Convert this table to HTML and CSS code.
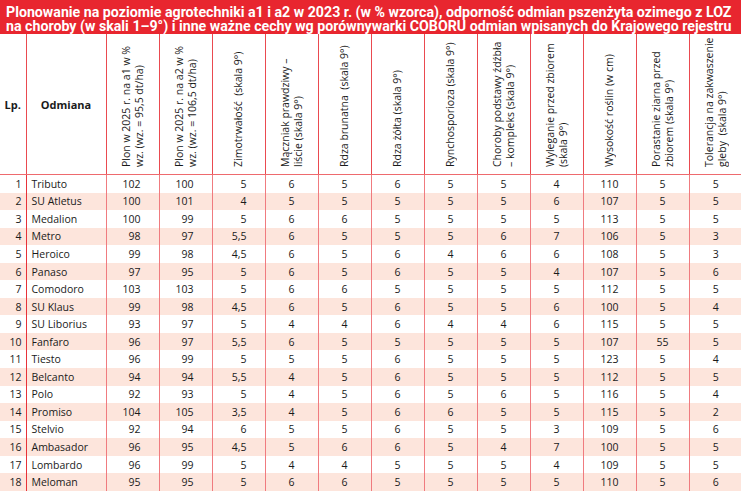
FILE: index.html
```html
<!DOCTYPE html>
<html lang="pl">
<head>
<meta charset="utf-8">
<title>Plonowanie pszenżyta ozimego</title>
<link rel="stylesheet" href="styles.css">
</head>
<body>
<div class="title">Plonowanie na poziomie agrotechniki a1 i a2 w 2023 r. (w % wzorca), odporność odmian pszenżyta ozimego z LOZ<br>na choroby (w skali 1–9°) i inne ważne cechy wg porównywarki COBORU odmian wpisanych do Krajowego rejestru</div>
<table class="grid">
<colgroup>
<col class="c-lp"><col class="c-name">
<col class="c-n"><col class="c-n"><col class="c-n"><col class="c-n"><col class="c-n"><col class="c-n"><col class="c-n"><col class="c-n"><col class="c-n"><col class="c-n"><col class="c-n"><col class="c-last">
</colgroup>
<thead>
<tr>
<th class="h-lp">Lp.</th>
<th class="h-name">Odmiana</th>
<th><div class="rot">Plon w 2025 r. na a1 w %<br>wz. (wz. = 95,5 dt/ha)</div></th>
<th><div class="rot">Plon w 2025 r. na a2 w %<br>wz. (wz. = 106,5 dt/ha)</div></th>
<th><div class="rot">Zimotrwałość&nbsp; (skala 9°)</div></th>
<th><div class="rot">Mączniak prawdziwy –<br>liście (skala 9°)</div></th>
<th><div class="rot">Rdza brunatna&nbsp; (skala 9°)</div></th>
<th><div class="rot">Rdza żółta (skala 9°)</div></th>
<th><div class="rot">Rynchosporioza (skala 9°)</div></th>
<th><div class="rot">Choroby podstawy źdźbła<br>– kompleks (skala 9°)</div></th>
<th><div class="rot">Wyleganie przed zbiorem<br>(skala 9°)</div></th>
<th><div class="rot">Wysokość roślin (w cm)</div></th>
<th><div class="rot">Porastanie ziarna przed<br>zbiorem (skala 9°)</div></th>
<th><div class="rot">Tolerancja na zakwaszenie<br>gleby&nbsp; (skala 9°)</div></th>
</tr>
</thead>
<tbody>
<tr><td class="lp">1</td><td class="name">Tributo</td><td class="r">102</td><td class="r">100</td><td class="r">5</td><td>6</td><td>5</td><td>6</td><td>5</td><td>5</td><td>4</td><td>110</td><td>5</td><td>5</td></tr>
<tr><td class="lp">2</td><td class="name">SU Atletus</td><td class="r">100</td><td class="r">101</td><td class="r">4</td><td>5</td><td>5</td><td>5</td><td>5</td><td>5</td><td>6</td><td>107</td><td>5</td><td>5</td></tr>
<tr><td class="lp">3</td><td class="name">Medalion</td><td class="r">100</td><td class="r">99</td><td class="r">5</td><td>6</td><td>6</td><td>5</td><td>5</td><td>5</td><td>5</td><td>113</td><td>5</td><td>5</td></tr>
<tr><td class="lp">4</td><td class="name">Metro</td><td class="r">98</td><td class="r">97</td><td class="r">5,5</td><td>6</td><td>5</td><td>5</td><td>5</td><td>6</td><td>7</td><td>106</td><td>5</td><td>3</td></tr>
<tr><td class="lp">5</td><td class="name">Heroico</td><td class="r">99</td><td class="r">98</td><td class="r">4,5</td><td>6</td><td>5</td><td>6</td><td>4</td><td>6</td><td>6</td><td>108</td><td>5</td><td>3</td></tr>
<tr><td class="lp">6</td><td class="name">Panaso</td><td class="r">97</td><td class="r">95</td><td class="r">5</td><td>6</td><td>5</td><td>6</td><td>5</td><td>5</td><td>4</td><td>107</td><td>5</td><td>6</td></tr>
<tr><td class="lp">7</td><td class="name">Comodoro</td><td class="r">103</td><td class="r">103</td><td class="r">5</td><td>6</td><td>6</td><td>5</td><td>5</td><td>5</td><td>5</td><td>112</td><td>5</td><td>5</td></tr>
<tr><td class="lp">8</td><td class="name">SU Klaus</td><td class="r">99</td><td class="r">98</td><td class="r">4,5</td><td>6</td><td>5</td><td>6</td><td>5</td><td>5</td><td>6</td><td>100</td><td>5</td><td>4</td></tr>
<tr><td class="lp">9</td><td class="name">SU Liborius</td><td class="r">93</td><td class="r">97</td><td class="r">5</td><td>4</td><td>4</td><td>6</td><td>4</td><td>4</td><td>6</td><td>115</td><td>5</td><td>5</td></tr>
<tr><td class="lp">10</td><td class="name">Fanfaro</td><td class="r">96</td><td class="r">97</td><td class="r">5,5</td><td>6</td><td>5</td><td>5</td><td>5</td><td>5</td><td>5</td><td>107</td><td>55</td><td>5</td></tr>
<tr><td class="lp">11</td><td class="name">Tiesto</td><td class="r">96</td><td class="r">99</td><td class="r">5</td><td>5</td><td>5</td><td>6</td><td>5</td><td>5</td><td>5</td><td>123</td><td>5</td><td>4</td></tr>
<tr><td class="lp">12</td><td class="name">Belcanto</td><td class="r">94</td><td class="r">94</td><td class="r">5,5</td><td>4</td><td>5</td><td>6</td><td>5</td><td>5</td><td>5</td><td>112</td><td>5</td><td>5</td></tr>
<tr><td class="lp">13</td><td class="name">Polo</td><td class="r">92</td><td class="r">93</td><td class="r">5</td><td>4</td><td>5</td><td>6</td><td>5</td><td>6</td><td>5</td><td>116</td><td>5</td><td>4</td></tr>
<tr><td class="lp">14</td><td class="name">Promiso</td><td class="r">104</td><td class="r">105</td><td class="r">3,5</td><td>4</td><td>5</td><td>6</td><td>6</td><td>5</td><td>5</td><td>115</td><td>5</td><td>2</td></tr>
<tr><td class="lp">15</td><td class="name">Stelvio</td><td class="r">92</td><td class="r">94</td><td class="r">6</td><td>5</td><td>5</td><td>6</td><td>5</td><td>5</td><td>3</td><td>109</td><td>5</td><td>6</td></tr>
<tr><td class="lp">16</td><td class="name">Ambasador</td><td class="r">96</td><td class="r">95</td><td class="r">4,5</td><td>5</td><td>6</td><td>6</td><td>5</td><td>4</td><td>7</td><td>100</td><td>5</td><td>5</td></tr>
<tr><td class="lp">17</td><td class="name">Lombardo</td><td class="r">96</td><td class="r">99</td><td class="r">5</td><td>4</td><td>4</td><td>5</td><td>5</td><td>5</td><td>4</td><td>109</td><td>5</td><td>5</td></tr>
<tr><td class="lp">18</td><td class="name">Meloman</td><td class="r">95</td><td class="r">95</td><td class="r">5</td><td>6</td><td>6</td><td>5</td><td>5</td><td>5</td><td>5</td><td>110</td><td>5</td><td>6</td></tr>
</tbody>
</table>
</body>
</html>
```

FILE: styles.css
```css
html, body {
  margin: 0;
  padding: 0;
  background: #ffffff;
}
body {
  width: 741px;
  height: 492px;
  overflow: hidden;
  font-family: "Open Sans", "Noto Sans", sans-serif;
  color: #1a1a1a;
}
.title {
  background: #e8262f;
  color: #ffffff;
  font-family: Roboto, "Open Sans", sans-serif;
  font-weight: 700;
  font-size: 14.2px;
  line-height: 14px;
  height: 34px;
  box-sizing: border-box;
  padding: 5px 0 0 6px;
  white-space: nowrap;
  overflow: hidden;
}
.grid {
  border-collapse: collapse;
  table-layout: fixed;
  width: 742px;
  font-size: 10.5px;
}
.c-lp { width: 26px; }
.c-name { width: 80px; }
.c-n { width: 53px; }
.c-last { width: 53px; }
.grid th, .grid td {
  padding: 0;
  border-left: 1px solid #ea4a50;
}
.grid th:first-child, .grid td:first-child {
  border-left: none;
}
.grid thead th {
  height: 140px;
  border-bottom: 1px solid #ee6a6e;
  font-weight: 400;
  font-size: 10.5px;
  text-align: center;
  vertical-align: bottom;
}
.grid thead th.h-lp,
.grid thead th.h-name {
  font-weight: 700;
  vertical-align: middle;
  font-size: 11px;
}
.rot {
  display: inline-block;
  writing-mode: vertical-rl;
  transform: rotate(180deg);
  height: 131px;
  text-align: start;
  line-height: 13px;
  margin-bottom: 4px;
  white-space: nowrap;
}
.grid tbody td {
  height: 17.55px;
  line-height: 12px;
  text-align: center;
  vertical-align: middle;
  border-left-color: #f07b7f;
}
.grid tbody td.lp {
  text-align: right;
  padding-right: 4px;
}
.grid tbody td.name {
  text-align: left;
  padding-left: 5px;
  border-left-color: #e8323a;
}
.grid tbody td.r {
  text-align: right;
  padding-right: 18px;
}
.grid tbody tr:nth-child(even) td {
  background: #fde5dc;
}
```
